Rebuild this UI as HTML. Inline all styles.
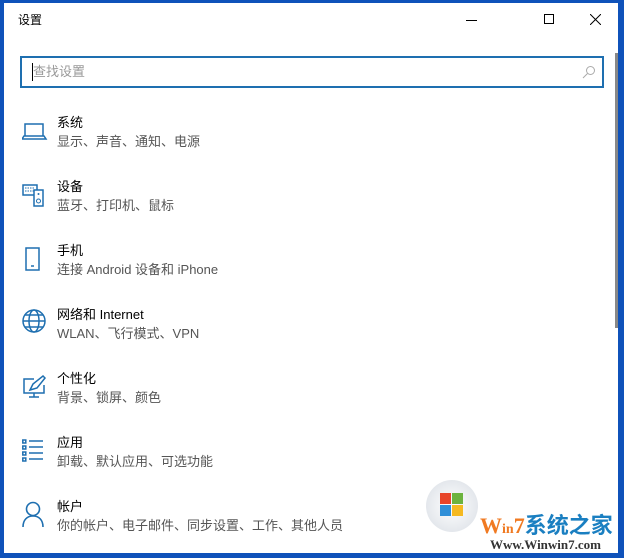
<!DOCTYPE html>
<html><head><meta charset="utf-8"><style>
*{margin:0;padding:0;box-sizing:border-box}
body{width:624px;height:558px;background:#0f52ba;position:relative;overflow:hidden;font-family:"Liberation Sans","Microsoft YaHei","Noto Sans CJK SC",sans-serif}
#win{position:absolute;left:4px;top:3px;width:614px;height:550px;background:#fff}
.t{position:absolute;font-size:13px;color:#000}
.s{position:absolute;font-size:13px;color:#555}
.ic{position:absolute;left:18px}
</style></head><body>
<div id="win">
<div class="t" style="left:14px;top:8px;font-size:12px">设置</div>
<div style="position:absolute;left:462px;top:17px;width:11px;height:1px;background:#000"></div>
<div style="position:absolute;left:540px;top:11px;width:10px;height:10px;border:1px solid #000"></div>
<svg style="position:absolute;left:586px;top:11px" width="11" height="11"><path d="M0 0L11 11M11 0L0 11" stroke="#000" stroke-width="1"/></svg>
<div style="position:absolute;left:16px;top:53px;width:584px;height:32px;border:2px solid #1e6fb0"></div>
<div style="position:absolute;left:28px;top:60px;width:1px;height:18px;background:#000"></div>
<div class="s" style="left:29px;top:58px;color:#999">查找设置</div>
<svg style="position:absolute;left:578px;top:62px" width="14" height="14"><circle cx="8.5" cy="5.5" r="4" fill="none" stroke="#aaa"/><path d="M5.5 8.5L1 13" stroke="#aaa"/></svg>
<div style="position:absolute;left:611px;top:50px;width:3px;height:275px;background:#888"></div>

<svg class="ic" style="top:119px" width="26" height="20"><path d="M3 2h18v12H3zM0 17h24l-2-3H2z" fill="none" stroke="#1e6fb0" stroke-width="1.5"/></svg>
<div class="t" style="left:53px;top:109px">系统</div><div class="s" style="left:53px;top:128px">显示、声音、通知、电源</div>

<svg class="ic" style="top:181px" width="26" height="26"><rect x="1" y="1" width="14" height="10" fill="none" stroke="#1e6fb0" stroke-width="1.5"/><path d="M3 4h10M3 7h10" stroke="#1e6fb0" stroke-dasharray="1.5 1"/><rect x="12" y="6" width="9" height="16" fill="#fff" stroke="#1e6fb0" stroke-width="1.5"/><circle cx="16.5" cy="17" r="2" fill="none" stroke="#1e6fb0"/><circle cx="16.5" cy="10" r="1" fill="#1e6fb0"/></svg>
<div class="t" style="left:53px;top:173px">设备</div><div class="s" style="left:53px;top:192px">蓝牙、打印机、鼠标</div>

<svg class="ic" style="top:244px" width="26" height="26"><rect x="4" y="1" width="13" height="22" fill="none" stroke="#1e6fb0" stroke-width="1.5"/><path d="M9 19h3" stroke="#1e6fb0" stroke-width="1.5"/></svg>
<div class="t" style="left:53px;top:237px">手机</div><div class="s" style="left:53px;top:256px">连接 Android 设备和 iPhone</div>

<svg class="ic" style="top:306px" width="26" height="26"><g fill="none" stroke="#1e6fb0" stroke-width="1.5"><circle cx="12" cy="12" r="11"/><ellipse cx="12" cy="12" rx="5" ry="11"/><path d="M1 12h22M3 6h18M3 18h18"/></g></svg>
<div class="t" style="left:53px;top:301px">网络和 Internet</div><div class="s" style="left:53px;top:320px">WLAN、飞行模式、VPN</div>

<svg class="ic" style="top:372px" width="26" height="26"><g fill="none" stroke="#1e6fb0" stroke-width="1.5"><path d="M12 4H2v14h20v-8"/><path d="M12 18v4M7 22h10"/><path d="M8 15l3-6 10-8 2 2-8 10z"/></g></svg>
<div class="t" style="left:53px;top:365px">个性化</div><div class="s" style="left:53px;top:384px">背景、锁屏、颜色</div>

<svg class="ic" style="top:436px" width="26" height="26"><g fill="none" stroke="#1e6fb0" stroke-width="1.5"><rect x="0.8" y="1" width="3" height="3"/><rect x="0.8" y="7" width="3" height="3"/><rect x="0.8" y="13" width="3" height="3"/><rect x="0.8" y="19" width="3" height="3"/><path d="M7 2h14M7 8h14M7 14h14M7 20h14"/></g></svg>
<div class="t" style="left:53px;top:429px">应用</div><div class="s" style="left:53px;top:448px">卸载、默认应用、可选功能</div>

<svg class="ic" style="top:498px" width="26" height="28"><g fill="none" stroke="#1e6fb0" stroke-width="1.6"><circle cx="11" cy="8" r="6.5"/><path d="M1 26c0-7 4-11 10-11s10 4 10 11"/></g></svg>
<div class="t" style="left:53px;top:493px">帐户</div><div class="s" style="left:53px;top:512px">你的帐户、电子邮件、同步设置、工作、其他人员</div>

<div style="position:absolute;left:422px;top:477px;width:52px;height:52px;border-radius:50%;background:radial-gradient(#fff,#d8dde4);"></div>
<div style="position:absolute;left:436px;top:490px;width:11px;height:11px;background:#e8452a"></div>
<div style="position:absolute;left:448px;top:490px;width:11px;height:11px;background:#6cb33e"></div>
<div style="position:absolute;left:436px;top:502px;width:11px;height:11px;background:#2f8fd8"></div>
<div style="position:absolute;left:448px;top:502px;width:11px;height:11px;background:#f5b921"></div>
<div style="position:absolute;left:476px;top:505px;font-size:22px;font-weight:bold;color:#f07a22;font-family:'Liberation Serif',serif">W<span style="font-size:14px">in</span>7<span style="color:#1a7fc1;font-family:'Noto Sans CJK SC',sans-serif">系统之家</span></div>
<div style="position:absolute;left:486px;top:534px;font-size:13px;font-weight:bold;color:#333;font-family:'Liberation Serif',serif">Www.Winwin7.com</div>
</div>
</body></html>
